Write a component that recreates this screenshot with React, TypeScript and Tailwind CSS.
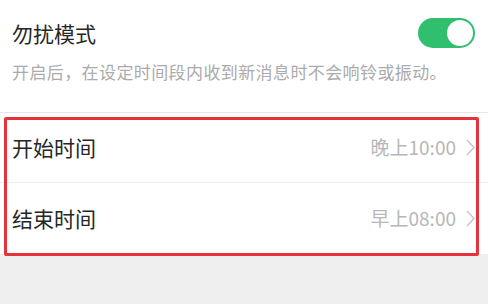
import React from "react";

const font = {
  fontFamily: '"Noto Sans CJK SC", "Noto Sans", Roboto, sans-serif',
};

const Chevron = () => (
  <svg width="9" height="17" viewBox="0 0 9 17" fill="none" className="shrink-0">
    <path d="M1 1l7 7.5L1 16" stroke="#c4c4c4" strokeWidth="1.4" />
  </svg>
);

const TimeRow = ({ label, value, last }: { label: string; value: string; last?: boolean }) => (
  <div
    className={`flex items-center justify-between pl-3 pr-[13px] ${
      last ? "h-[71px]" : "h-[70px] border-b border-[#ececec]"
    }`}
  >
    <span className="text-[21px] text-[#262626]">{label}</span>
    <div className="flex items-center gap-[10px]">
      <span className="text-[19px] text-[#b7b7b7]">{value}</span>
      <Chevron />
    </div>
  </div>
);

export default function App() {
  return (
    <div className="relative flex h-[304px] w-[488px] flex-col bg-[#efeff0]" style={font}>
      {/* Do not disturb */}
      <div className="border-b border-[#e6e6e6] bg-white pb-[29px] pl-3 pr-3 pt-[15px]">
        <div className="flex items-center justify-between">
          <span className="text-[21px] leading-[36px] text-[#262626]">勿扰模式</span>
          <div className="mr-[1px] flex h-[30px] w-[57px] items-center justify-end rounded-full bg-[#2fbf6f] p-[2px]">
            <div className="h-[26px] w-[26px] rounded-full bg-white" />
          </div>
        </div>
        <p className="mt-[10px] text-[17px] leading-[22px] tracking-[0.4px] text-[#ababab]">
          开启后，在设定时间段内收到新消息时不会响铃或振动。
        </p>
      </div>

      {/* Time range */}
      <div className="bg-white">
        <TimeRow label="开始时间" value="晚上10:00" />
        <TimeRow label="结束时间" value="早上08:00" last />
      </div>

      {/* annotation box */}
      <div className="pointer-events-none absolute left-[4px] top-[117px] h-[139px] w-[475px] rounded-[2px] border-[3px] border-[#e5333b]" />
    </div>
  );
}
